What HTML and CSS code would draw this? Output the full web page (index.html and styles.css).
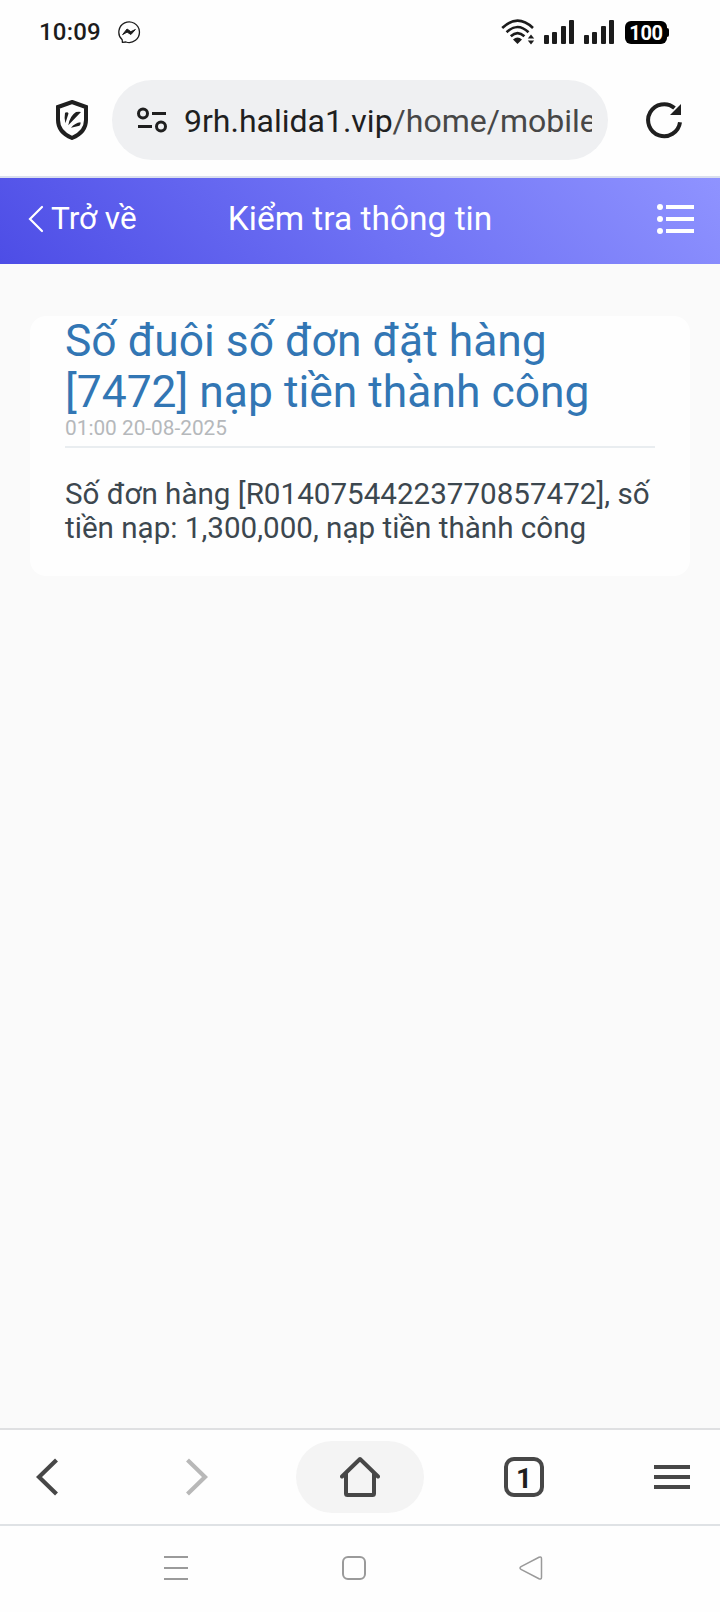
FILE: index.html
```
<!DOCTYPE html>
<html lang="vi">
<head>
<meta charset="UTF-8">
<meta name="viewport" content="width=device-width, initial-scale=1.0">
<title>Kiểm tra thông tin</title>
<link rel="stylesheet" href="styles.css">
</head>
<body>

<div class="status-bar">
  <span class="time">10:09</span>
  <svg class="messenger" width="24" height="24" viewBox="0 0 24 24">
    <path d="M5.2 19.8A10.3 10.3 0 1 1 9 22l-3.6.4z" fill="none" stroke="#1c1c1c" stroke-width="1.3" stroke-linejoin="round"/>
    <path d="M5.6 14.6l4.5-5.6 3.7 2.7 4.6-2.2-4.5 5-3.8-2.4z" fill="#1c1c1c" stroke="#1c1c1c" stroke-width="1" stroke-linejoin="round"/>
  </svg>
  <svg class="wifi" width="34" height="26" viewBox="0 0 34 26">
    <g fill="none" stroke="#1c1c1c" stroke-width="2.6">
      <path d="M1.2 9Q16.5-5.6 32 9"/>
      <path d="M5.6 13.2Q16.5 2.8 27.5 13.2"/>
      <path d="M9.8 17.3Q16.5 10.8 23.4 17.3"/>
    </g>
    <path d="M12 20.400q4.500-3.600 9 0L16.500 25z" fill="#1c1c1c"/>
    <path d="M26.800 19.600l3.200-4 3.200 4zM26.800 21.600h6.400l-3.200 4z" fill="#1c1c1c"/>
  </svg>
  <div class="signal"><i class="s1"></i><i class="s2"></i><i class="s3"></i><i class="s4"></i></div>
  <div class="signal"><i class="s1"></i><i class="s2"></i><i class="s3"></i><i class="s4"></i></div>
  <div class="battery">100</div>
  <div class="battery-tip"></div>
</div>

<div class="toolbar">
  <svg class="shield" width="32" height="40" viewBox="0 0 32 40">
    <path d="M16 2L30 7v13c0 9-5.500 14.500-14 18C7.500 34.500 2 29 2 20V7z" fill="none" stroke="#1f1f1f" stroke-width="4"/>
    <path d="M9 12.800q2.800-1.400 3.500.8L9.400 23.200q-1.400-5-.4-10.400zM12.300 25.300q1.500-9.300 7.700-13.200 2.500-.7 5-.2zM15 27.700q4-5 9.500-5.500.6 2.300-1 3.500z" fill="#1f1f1f"/>
  </svg>
  <div class="address">
    <svg width="30" height="26" viewBox="0 0 30 26">
      <g fill="none" stroke="#1f1f1f" stroke-width="3">
        <circle cx="6" cy="6.500" r="4.500"/>
        <circle cx="24" cy="19.500" r="4.500"/>
        <path d="M15 6.500h14M1 19.500h14"/>
      </g>
    </svg>
    <div class="url">9rh.halida1.vip<span>/home/mobile</span></div>
  </div>
  <svg class="reload" width="38" height="38" viewBox="0 0 38 38">
    <path d="M35 21.300A16 16 0 1 1 29.500 7" fill="none" stroke="#1f1f1f" stroke-width="4"/>
    <path d="M36 3v11H25z" fill="#1f1f1f"/>
  </svg>
</div>

<div class="header">
  <a class="back">
    <svg width="16" height="28" viewBox="0 0 16 28">
      <path d="M14 2L2 14l12 12" fill="none" stroke="#fff" stroke-width="2.2" stroke-linecap="round"/>
    </svg>
    <span>Trở về</span>
  </a>
  <h1>Kiểm tra thông tin</h1>
  <svg class="list" width="38" height="32" viewBox="0 0 38 32">
    <g fill="#fff">
      <circle cx="3" cy="4" r="3"/>
      <circle cx="3" cy="16" r="3"/>
      <circle cx="3" cy="28" r="3"/>
      <path d="M9 2h28v4H9zM9 14h28v4H9zM9 26h28v4H9z"/>
    </g>
  </svg>
</div>

<div class="content">
  <div class="card">
    <h2>Số đuôi số đơn đặt hàng<br>[7472] nạp tiền thành công</h2>
    <p class="date">01:00 20-08-2025</p>
    <p class="message">Số đơn hàng [R01407544223770857472], số<br>tiền nạp: 1,300,000, nạp tiền thành công</p>
  </div>
</div>

<div class="browser-nav">
  <svg class="nav-back" width="24" height="40" viewBox="0 0 24 40">
    <path d="M20.500 3L3 20l17.500 17" fill="none" stroke="#474747" stroke-width="4.200"/>
  </svg>
  <svg class="nav-forward" width="24" height="40" viewBox="0 0 24 40">
    <path d="M3.500 3L21 20 3.500 37" fill="none" stroke="#b8b8b8" stroke-width="4.200"/>
  </svg>
  <div class="home">
    <svg width="40" height="42" viewBox="0 0 40 42">
      <path d="M2 20.500L20 3l18 17.500M6 17v20.500q0 1.500 1.500 1.500h25q1.500 0 1.500-1.500V17" fill="none" stroke="#474747" stroke-width="4" stroke-linecap="round" stroke-linejoin="round"/>
    </svg>
  </div>
  <div class="tabs">1</div>
  <div class="menu"><i></i><i></i><i></i></div>
</div>

<!-- Android system buttons -->
<div class="system-nav">
  <div class="recents"><i></i><i></i><i></i></div>
  <div class="square"></div>
  <svg class="triangle" width="24" height="24" viewBox="0 0 24 24">
    <path d="M2 10.700L20 1.300q2.500-1 2.500 1.500v18.400q0 2.500-2.500 1.500L2 13.300q-2-1.300 0-2.600z" fill="none" stroke="#9a9a9a" stroke-width="1.500"/>
  </svg>
</div>

</body>
</html>
```
FILE: styles.css
```
* {
  box-sizing: border-box;
}
body {
  margin: 0;
  height: 1612px;
  display: flex;
  flex-direction: column;
  background-color: #fefefe;
  font-family: Roboto, "Noto Sans", sans-serif;
  overflow: hidden;
}
h1, h2, p {
  margin: 0;
  font-weight: 400;
}
svg {
  display: block;
  flex: none;
}

/* Status bar */
.status-bar {
  height: 64px;
  display: flex;
  align-items: center;
  padding: 0 51px 0 39px;
  color: #1c1c1c;
}
.time {
  font-size: 24px;
  font-weight: 500;
  width: 78px;
  letter-spacing: 0.2px;
}
.wifi {
  margin-left: auto;
  margin-right: 9px;
}
.signal {
  display: flex;
  align-items: flex-end;
  gap: 3.3px;
  width: 30px;
  height: 24px;
  margin-right: 10px;
}
.signal i {
  width: 5px;
  background-color: #1c1c1c;
  border-radius: 1px;
}
.s1 { height: 9px; }
.s2 { height: 12px; }
.s3 { height: 18px; }
.s4 { height: 24px; }
.battery {
  width: 42px;
  height: 23px;
  margin-left: 1px;
  border-radius: 6px;
  background-color: #000;
  color: #fff;
  font-size: 20px;
  font-weight: 700;
  line-height: 24px;
  text-align: center;
  letter-spacing: -0.3px;
}
.battery-tip {
  width: 2px;
  height: 9px;
  background-color: #000;
  border-radius: 0 2px 2px 0;
}

/* Address bar */
.toolbar {
  height: 114px;
  display: flex;
  align-items: center;
  padding: 0 37px 0 56px;
  border-bottom: 2px solid #dadfee;
}
.address {
  width: 496px;
  height: 80px;
  margin-left: 24px;
  padding: 0 16px 0 25px;
  display: flex;
  align-items: center;
  border-radius: 40px;
  background-color: #eff0f2;
}
.url {
  flex: 1;
  margin-left: 17px;
  padding-top: 2px;
  overflow: hidden;
  white-space: nowrap;
  font-size: 32px;
  color: #1f1f1f;
}
.url span {
  color: #474747;
}
.reload {
  margin-left: auto;
}

/* Page header */
.header {
  height: 86px;
  display: grid;
  grid-template-columns: 1fr auto 1fr;
  align-items: center;
  padding: 0 25px 5px;
  background: linear-gradient(45deg, #4d4de6, #6e71f4 50%, #8f93ff);
  color: #fff;
}
.back {
  display: flex;
  align-items: center;
  gap: 7px;
  margin-left: 3px;
  font-size: 31.5px;
}
.header h1 {
  font-size: 33.5px;
  margin-bottom: 1px;
}
.list {
  justify-self: end;
}

/* Message card */
.content {
  flex: 1;
  padding: 52px 30px 0;
  background-color: #fafafa;
}
.card {
  height: 260px;
  padding: 0 35px;
  border-radius: 16px;
  background-color: #fefefe;
  white-space: nowrap;
}
.card h2 {
  font-size: 44.4px;
  line-height: 51px;
  color: #3276b4;
}
.date {
  padding-bottom: 8px;
  border-bottom: 2px solid #e9edf0;
  font-size: 20.8px;
  line-height: 20px;
  color: #b5b8bb;
}
.message {
  margin-top: 29px;
  font-size: 29.6px;
  line-height: 34px;
  color: #3c474f;
}

/* Browser buttons */
.browser-nav {
  height: 98px;
  display: flex;
  align-items: center;
  padding: 0 30px 0 36px;
  border-top: 2px solid #dfe0e2;
  border-bottom: 2px solid #dfe2e5;
}
.nav-forward {
  margin-left: 124px;
}
.home {
  width: 128px;
  height: 72px;
  margin-left: 88px;
  display: flex;
  align-items: center;
  justify-content: center;
  border-radius: 36px;
  background-color: #f4f4f4;
}
.tabs {
  width: 40px;
  height: 40px;
  margin-left: 80px;
  border: 4px solid #474747;
  border-radius: 10px;
  font-size: 28px;
  font-weight: 700;
  line-height: 36px;
  text-align: center;
  color: #1f1f1f;
}
.menu {
  margin-left: auto;
  display: flex;
  flex-direction: column;
  gap: 6px;
}
.menu i {
  width: 36px;
  height: 4px;
  background-color: #474747;
}

/* System buttons */
.system-nav {
  height: 86px;
  display: flex;
  align-items: center;
  justify-content: space-between;
  padding: 0 177px 2px 164px;
}
.recents {
  display: flex;
  flex-direction: column;
  gap: 9px;
}
.recents i {
  width: 24px;
  height: 2px;
  background-color: #9a9a9a;
}
.square {
  width: 24px;
  height: 24px;
  border: 2px solid #9a9a9a;
  border-radius: 6px;
}
```
